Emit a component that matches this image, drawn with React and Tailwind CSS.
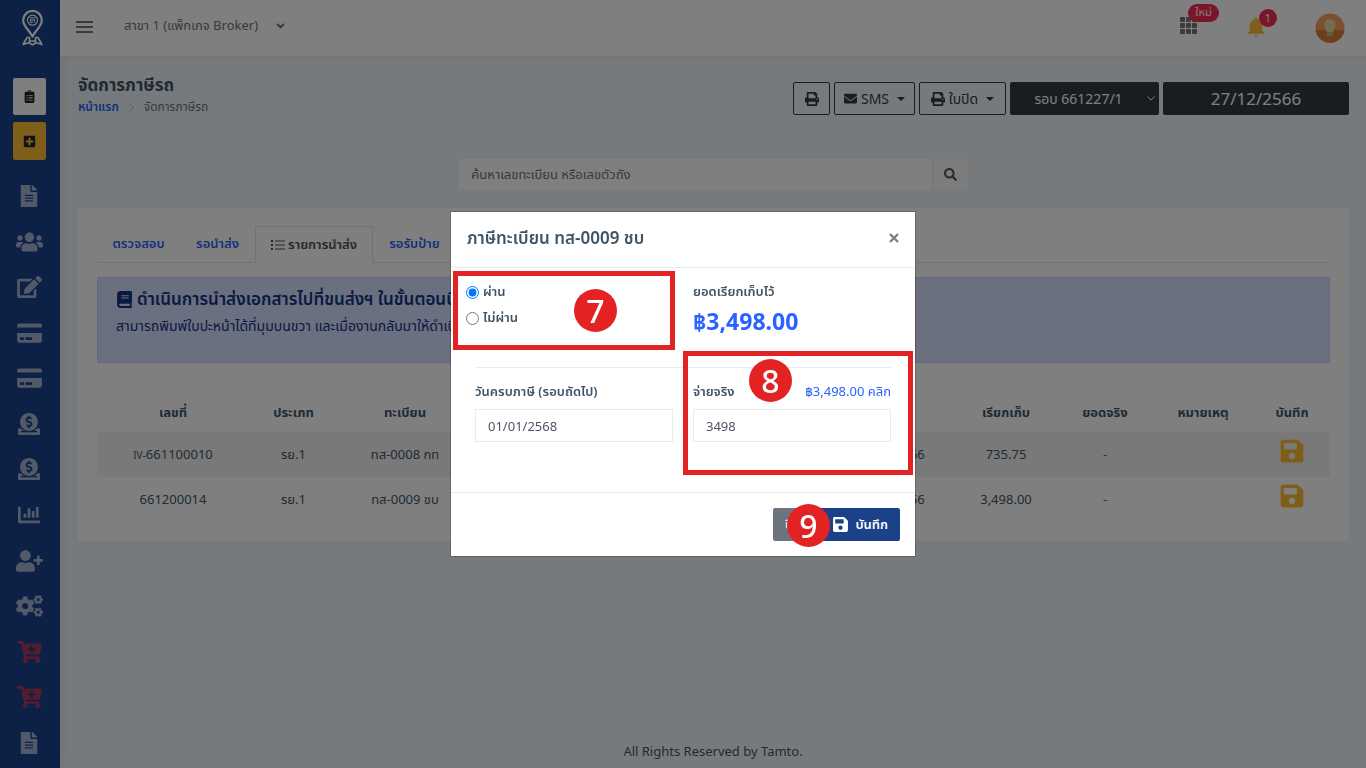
import React from 'react';
import {
  FaBook, FaCartPlus, FaChartBar, FaClipboardList, FaCogs, FaCreditCard, FaDonate, FaEdit,
  FaEnvelope, FaFileAlt, FaPlusSquare, FaPrint, FaSave, FaSearch, FaUserPlus, FaUsers,
} from 'react-icons/fa';
import { IoMdNotifications } from 'react-icons/io';

const navItems = [
  { label: 'เอกสาร', Icon: FaFileAlt },
  { label: 'ลูกค้า', Icon: FaUsers, wide: true },
  { label: 'แก้ไข', Icon: FaEdit, wide: true },
  { label: 'บัตร', Icon: FaCreditCard, wide: true },
  { label: 'ชำระเงิน', Icon: FaCreditCard, wide: true },
  { label: 'รายรับ', Icon: FaDonate },
  { label: 'รายจ่าย', Icon: FaDonate },
  { label: 'รายงาน', Icon: FaChartBar },
  { label: 'เพิ่มผู้ใช้', Icon: FaUserPlus, wide: true },
  { label: 'ตั้งค่า', Icon: FaCogs, wide: true },
  { label: 'สั่งซื้อ', Icon: FaCartPlus, wide: true, danger: true },
  { label: 'สั่งซื้อเพิ่ม', Icon: FaCartPlus, wide: true, danger: true },
  { label: 'คู่มือ', Icon: FaFileAlt },
];

const rows = [
  { no: '661100010', prefix: 'IV-', type: 'รย.1', plate: 'ทส-0008 กท', date: '27/12/2566', billed: '735.75' },
  { no: '661200014', prefix: '', type: 'รย.1', plate: 'ทส-0009 ชบ', date: '27/12/2566', billed: '3,498.00' },
];

function Logo() {
  return (
    <svg viewBox="0 0 21 36" className="h-9 w-[21px]" fill="none" stroke="#fff" strokeLinejoin="round" aria-hidden="true">
      <path d="M10.5 26.500 C8 21 1.200 16.500 1.200 10.200 A9.300 9.300 0 0 1 19.800 10.200 C19.800 16.500 13 21 10.500 26.500Z" strokeWidth="2.2" />
      <circle cx="10.5" cy="10.2" r="5" strokeWidth="1.2" />
      <path d="M7.500 7.800h6M8 9.800h5M8.500 9.800v2.600h1.800v-1M12.500 9.800v2.600" strokeWidth="1" />
      <path d="M5 27.500 L1.200 34.400 L6.500 32.800 L10.500 34.800 L14.500 32.800 L19.800 34.400 L16 27.500 M4.800 27.500 H7.500 V32.800 M16.200 27.500 H13.500 V32.800 M7.500 31 H13.500" strokeWidth="1.700" />
    </svg>
  );
}

function ListIcon() {
  return (
    <svg viewBox="0 0 14 10" className="h-[10px] w-[14px]" fill="currentColor" aria-hidden="true">
      <path d="M0 0h2v2H0zM0 4h2v2H0zM0 8h2v2H0zM4 .5h10v1H4zM4 4.5h10v1H4zM4 8.5h10v1H4z" />
    </svg>
  );
}

function Caret() {
  return <svg viewBox="0 0 8 4" className="h-1 w-2" fill="currentColor" aria-hidden="true"><path d="M0 0h8L4 4z" /></svg>;
}

function Sidebar() {
  return (
    <aside className="flex w-[60px] shrink-0 flex-col items-center bg-[#1b408b] pt-[10px] pr-0.5 pb-[14px] shadow-[1px_0_20px_rgba(0,0,0,0.08)]">
      <a href="#home" aria-label="Tamto" className="ml-1.5"><Logo /></a>
      <div className="mt-8 flex flex-col gap-[7px]">
        <button aria-label="รายการ" className="flex h-[37px] w-[33px] items-center justify-center rounded-xs bg-white text-[#212529]"><FaClipboardList size={13} /></button>
        <button aria-label="เพิ่มรายการ" className="flex h-[38px] w-[33px] items-center justify-center rounded-xs bg-[#ffbc34] text-[#212529]"><FaPlusSquare size={13} /></button>
      </div>
      <nav className="mt-[25px] flex flex-1 flex-col items-center justify-between">
        {navItems.map(({ label, Icon, wide, danger }) => (
          <a key={label} href="#menu" aria-label={label} className={danger ? 'flex h-[22px] items-center text-[#a83a5e]' : 'flex h-[22px] items-center text-[#a4b3d0]'}>
            <Icon className={wide ? 'h-[22px] w-[27px]' : 'h-[22px] w-[22px]'} />
          </a>
        ))}
      </nav>
    </aside>
  );
}

function TopBar() {
  return (
    <header className="flex h-14 items-center justify-between bg-white pr-[21px] pl-4 shadow-xs">
      <div className="flex items-center text-[13px] text-[#6c757d]">
        <button aria-label="เมนู" className="mr-[31px] flex w-[17px] flex-col gap-[3px] pb-0.5">
          <span className="h-0.5 bg-[#777]" /><span className="h-0.5 bg-[#777]" /><span className="h-0.5 bg-[#777]" />
        </button>
        <button className="flex items-center gap-[18px] pb-1">
          สาขา 1 (แพ็กเกจ Broker)
          <svg viewBox="0 0 10 7" className="h-[6px] w-[9px]" fill="none" stroke="currentColor" strokeWidth="2.4" aria-hidden="true"><path d="M1 1l4 4 4-4" /></svg>
        </button>
      </div>
      <div className="flex items-center text-xs">
        <button aria-label="แอป" className="relative mr-[47px] mb-1.5">
          <svg viewBox="0 0 17 17" className="size-[17px]" fill="#777" aria-hidden="true">
            {[0, 6, 12].map((y) => [0, 6, 12].map((x) => <rect key={`${x}-${y}`} x={x} y={y} width="5" height="5" rx="1" />))}
          </svg>
          <span className="absolute -top-[13px] left-2 flex h-[18px] w-[31px] items-center justify-center rounded-full bg-[#f62d51] text-[11px] text-white">ใหม่</span>
        </button>
        <button aria-label="การแจ้งเตือน" className="relative mr-[47px] mb-0.5 text-[#ffbc34]">
          <IoMdNotifications className="size-6" />
          <span className="absolute -top-[6px] left-[15px] flex size-[18px] items-center justify-center rounded-full bg-[#f62d51] text-[11px] text-white">1</span>
        </button>
        <button aria-label="บัญชีผู้ใช้">
          <svg viewBox="0 0 30 30" className="size-[30px]" aria-hidden="true">
            <circle cx="15" cy="15" r="14.5" fill="#f5a25d" />
            <path d="M.6 17h28.8A14.5 14.5 0 0 1 .6 17z" fill="#d9803f" />
            <path d="M15 6c-4 0-6 3-5.6 6.400.3 2.500 1.800 4.600 2.600 6.400v4h6v-4c.8-1.800 2.300-3.900 2.600-6.400C21 9 19 6 15 6z" fill="#ead9a0" />
            <path d="M12 19h6v4h-6z" fill="#c9b780" />
          </svg>
        </button>
      </div>
    </header>
  );
}

function PageHeading() {
  const outline = 'flex h-[33px] items-center gap-1 rounded-xs border border-[#343a40] text-sm text-[#343a40]';
  return (
    <div className="flex justify-between pt-[17px]">
      <div>
        <h1 className="text-[17px] leading-6 font-bold">จัดการภาษีรถ</h1>
        <nav aria-label="breadcrumb" className="flex items-center gap-[10px] text-xs leading-5">
          <a href="#home" className="font-semibold text-[#2962ff]">หน้าแรก</a>
          <svg viewBox="0 0 5 9" className="h-[9px] w-[5px]" fill="none" stroke="#b5bcc2" aria-hidden="true"><path d="M.5.5l4 4-4 4" /></svg>
          <span className="text-[#6c757d]">จัดการภาษีรถ</span>
        </nav>
      </div>
      <div className="mt-[9px] flex gap-1">
        <button aria-label="พิมพ์" className={`${outline} w-[37px] justify-center`}><FaPrint size={14} /></button>
        <button className={`${outline} w-[81px] justify-center`}><FaEnvelope size={13} />SMS<span className="ml-1"><Caret /></span></button>
        <button className={`${outline} w-[87px] justify-center`}><FaPrint size={14} />ใบปิด<span className="ml-1"><Caret /></span></button>
        <div className="relative">
          <select aria-label="รอบ" className="h-[33px] w-[149px] appearance-none rounded-xs bg-[#343a40] pr-3 text-sm text-white [text-align-last:center]"><option>รอบ 661227/1</option></select>
          <svg viewBox="0 0 8 5" className="pointer-events-none absolute top-[14px] right-1 h-[5px] w-2" fill="none" stroke="#fff" aria-hidden="true"><path d="M.5.5L4 4 7.500.5" /></svg>
        </div>
        <input aria-label="วันที่" readOnly value="27/12/2566" className="h-[33px] w-[186px] rounded-xs bg-[#343a40] text-center text-[17px] text-white" />
      </div>
    </div>
  );
}

function Tabs() {
  const tab = 'flex h-9 items-center justify-center text-[13px] font-semibold text-[#2962ff]';
  return (
    <nav className="flex border-b border-[#dee2e6]">
      <a href="#check" className={`${tab} w-[83px]`}>ตรวจสอบ</a>
      <a href="#wait" className={`${tab} w-[75px]`}>รอนำส่ง</a>
      <a href="#list" aria-current="page" className="-mb-px flex h-[37px] w-[118px] items-center justify-center gap-[3px] border border-b-0 border-[#dee2e6] bg-white text-[13px] font-semibold text-[#495057]"><ListIcon />รายการนำส่ง</a>
      <a href="#plate" className={`${tab} w-[83px]`}>รอรับป้าย</a>
    </nav>
  );
}

function TaxTable() {
  return (
    <table className="w-full table-fixed text-center text-[13px]">
      <colgroup>
        <col className="w-[152px]" /><col className="w-[89px]" /><col className="w-[134px]" /><col />
        <col className="w-[128px]" /><col className="w-[104px]" /><col className="w-[94px]" /><col className="w-[102px]" /><col className="w-[76px]" />
      </colgroup>
      <thead>
        <tr className="h-[39px]">
          <th>เลขที่</th><th>ประเภท</th><th>ทะเบียน</th><td /><td /><th>เรียกเก็บ</th><th>ยอดจริง</th><th>หมายเหตุ</th><th>บันทึก</th>
        </tr>
      </thead>
      <tbody>
        {rows.map((r) => (
          <tr key={r.no} className="h-[45px] odd:bg-[#f2f2f2]">
            <td><span className="text-[10px]">{r.prefix}</span>{r.no}</td>
            <td>{r.type}</td><td>{r.plate}</td><td /><td>{r.date}</td><td>{r.billed}</td>
            <td><a href="#actual" className="text-[#2962ff]">-</a></td><td />
            <td><button aria-label="บันทึก" className="block w-full pb-2"><FaSave className="mx-auto size-[26px] text-[#ffbc34]" /></button></td>
          </tr>
        ))}
      </tbody>
    </table>
  );
}

function Marker({ children, className }) {
  return <span className={`absolute flex size-[43px] items-center justify-center rounded-full bg-[#e32224] text-[32px] leading-none font-medium text-white ${className}`}>{children}</span>;
}

function TaxDialog() {
  const field = 'mt-2 h-[33px] w-full border border-[#e9ecef] px-3 text-[13px] text-[#4f5467]';
  return (
    <div className="fixed inset-0 flex items-center justify-center bg-black/50">
      <form role="dialog" aria-labelledby="dialog-title" className="relative w-[464px] bg-white text-[13px] shadow-[0_0_0_1px_rgba(0,0,0,0.2)]">
        <div className="flex h-14 items-center justify-between border-b border-[#e9ecef] px-4 pb-1">
          <h2 id="dialog-title" className="text-[17px] font-semibold">ภาษีทะเบียน ทส-0009 ชบ</h2>
          <button type="button" aria-label="ปิดหน้าต่าง" className="text-[#7f7f7f]">
            <svg viewBox="0 0 10 10" className="size-[10px]" fill="none" stroke="currentColor" strokeWidth="2.4" aria-hidden="true"><path d="M1 1l8 8M9 1L1 9" /></svg>
          </button>
        </div>
        <div className="h-[225px] border-b border-[#e9ecef] px-6 pt-[11px]">
          <div className="grid h-[89px] grid-cols-2 gap-5 border-b border-[#e9ecef]">
            <div className="-ml-[9px] font-semibold">
              <label className="flex h-[26px] items-center gap-1"><input type="radio" name="result" defaultChecked className="size-[13px] accent-[#0075ff]" />ผ่าน</label>
              <label className="flex h-[26px] items-center gap-1"><input type="radio" name="result" className="size-[13px]" />ไม่ผ่าน</label>
            </div>
            <div>
              <p className="leading-6 font-semibold">ยอดเรียกเก็บไว้</p>
              <p className="text-[23px] leading-9 font-bold text-[#2962ff]">฿3,498.00</p>
            </div>
          </div>
          <div className="grid grid-cols-2 gap-5 pt-[13px]">
            <div>
              <label htmlFor="due" className="block leading-5 font-semibold">วันครบภาษี (รอบถัดไป)</label>
              <input id="due" defaultValue="01/01/2568" className={field} />
            </div>
            <div>
              <div className="flex justify-between leading-5">
                <label htmlFor="paid" className="font-semibold">จ่ายจริง</label>
                <a href="#fill" className="text-[#2962ff]">฿3,498.00 คลิก</a>
              </div>
              <input id="paid" defaultValue="3498" className={field} />
            </div>
          </div>
        </div>
        <div className="flex h-[63px] items-center justify-end px-[15px] text-white">
          <button type="button" className="h-[33px] w-[46px] rounded-xs bg-[#6c757d] pl-3 text-left">ปิด</button>
          <button type="submit" className="flex h-[33px] w-[81px] items-center justify-end gap-1.5 rounded-xs bg-[#1b4188] pr-3 font-semibold"><FaSave size={17} />บันทึก</button>
        </div>
        <div className="pointer-events-none absolute top-[59px] left-0.5 h-[79px] w-[222px] border-5 border-[#e32224]" />
        <div className="pointer-events-none absolute top-[139px] left-[232px] h-[124px] w-[230px] border-5 border-[#e32224]" />
        <Marker className="top-[77px] left-[123px]">7</Marker>
        <Marker className="top-[147px] left-[298px]">8</Marker>
        <Marker className="top-[292px] left-[336px]">9</Marker>
      </form>
    </div>
  );
}

export default function App() {
  return (
    <div className="flex min-h-screen bg-[#eef5f9] font-['Noto_Sans','Noto_Sans_Thai',sans-serif] text-[#3e5569]">
      <Sidebar />
      <div className="flex min-w-0 flex-1 flex-col">
        <TopBar />
        <main className="flex-1 pr-[17px] pl-[18px]">
          <PageHeading />
          <form role="search" className="mx-auto mt-[42px] flex h-[31px] w-2/5">
            <input aria-label="ค้นหา" placeholder="ค้นหาเลขทะเบียน หรือเลขตัวถัง" className="min-w-0 flex-1 bg-white px-3 text-[13px] placeholder:text-[#6c757d]" />
            <button aria-label="ค้นหา" className="flex w-9 items-center justify-center border-l border-[#e9ecef] bg-[#f8f9fa] text-[#4f5467]"><FaSearch size={13} /></button>
          </form>
          <section className="mt-[18px] bg-white px-[19px] pt-[18px] pb-[19px]">
            <Tabs />
            <div className="mt-[14px] h-[86px] border border-[#c3d3ff] bg-[#d4e0ff] px-[18px] pt-[9px] text-[#153385]">
              <h2 className="flex items-center gap-1 text-[17px] leading-6 font-semibold"><FaBook size={17} />ดำเนินการนำส่งเอกสารไปที่ขนส่งฯ ในขั้นตอนนี้</h2>
              <p className="mt-[3px] text-sm leading-6">สามารถพิมพ์ใบปะหน้าได้ที่มุมบนขวา และเมื่องานกลับมาให้ดำเนินการ</p>
            </div>
            <div className="mt-[30px]"><TaxTable /></div>
          </section>
        </main>
        <footer className="pb-[7px] text-center text-[13px] leading-5">All Rights Reserved by Tamto.</footer>
      </div>
      <TaxDialog />
    </div>
  );
}
